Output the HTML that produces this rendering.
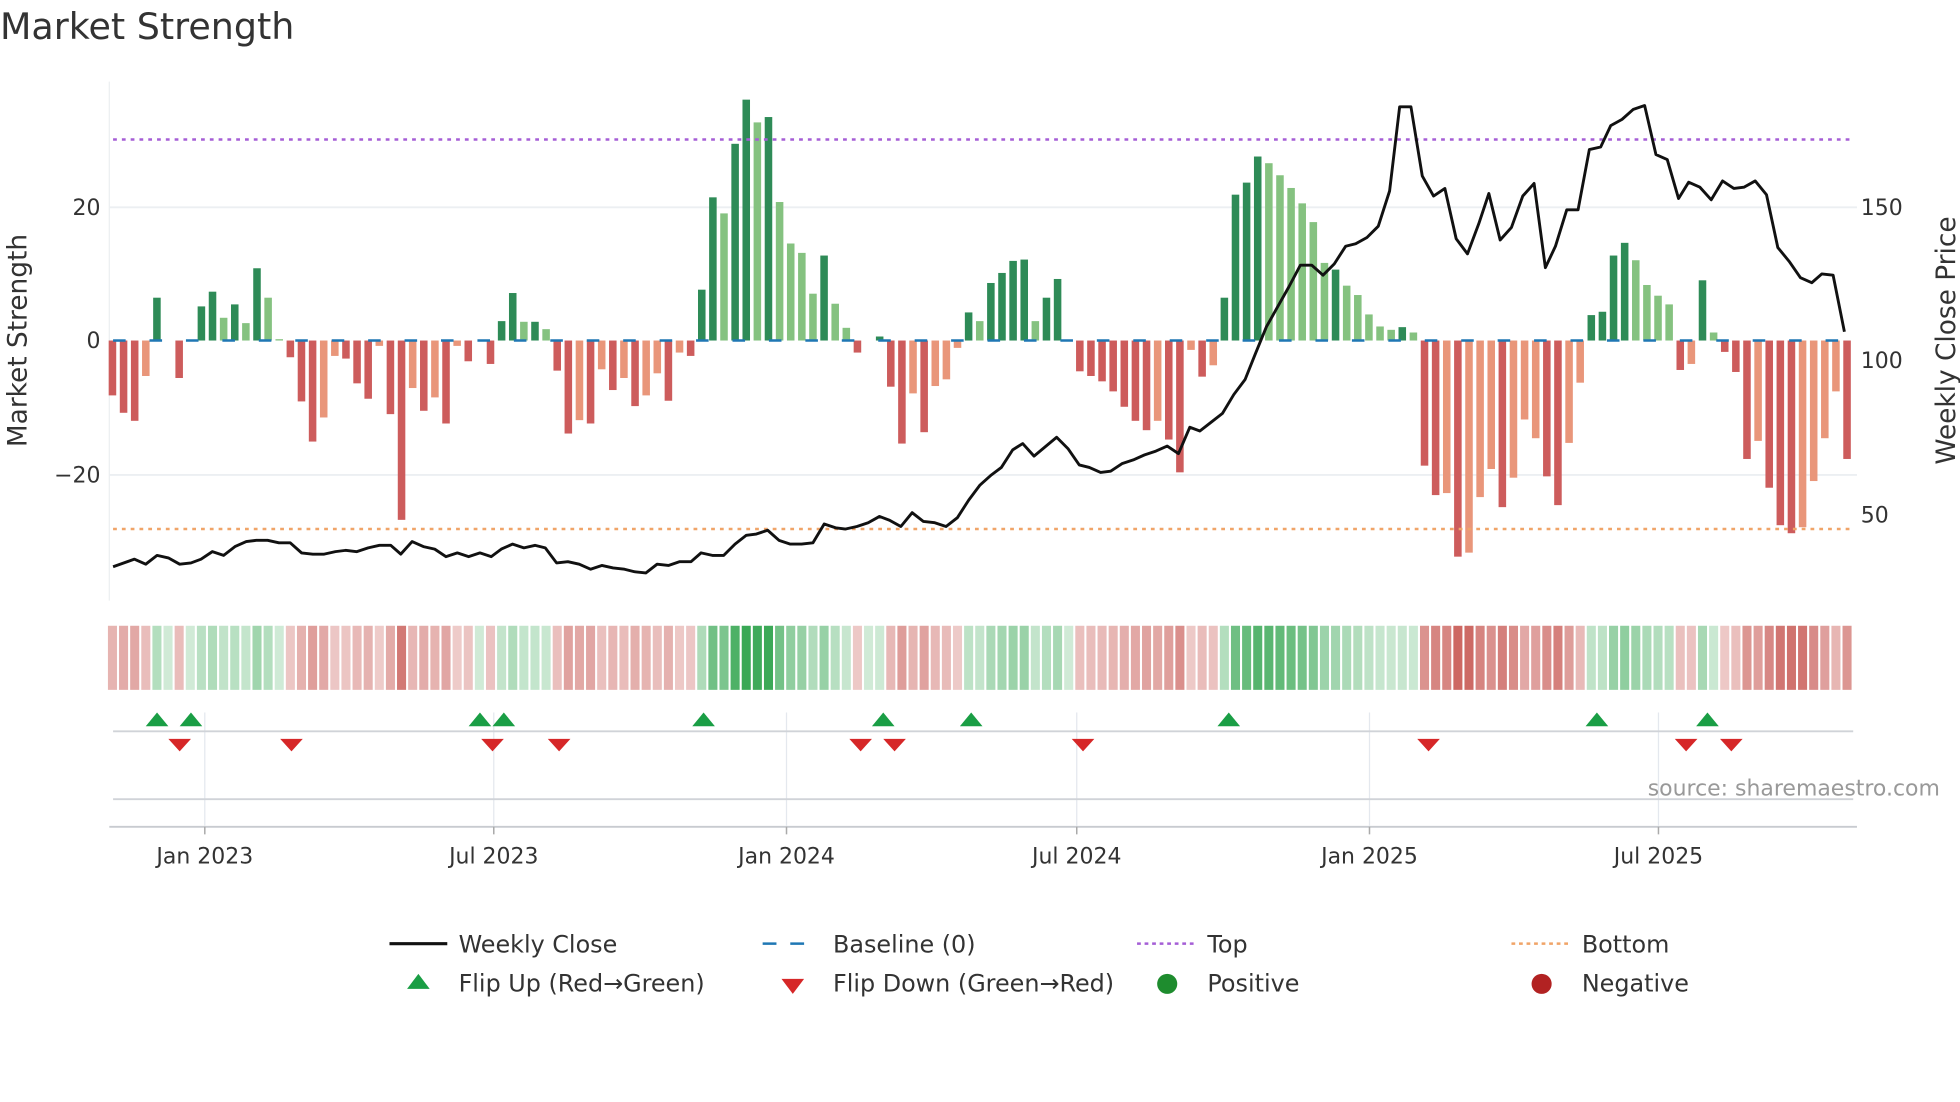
<!DOCTYPE html>
<html><head><meta charset="utf-8">
<style>
html,body{margin:0;padding:0;background:#fff;}
svg{display:block;}
text{font-family:"DejaVu Sans","Liberation Sans",sans-serif;fill:#333;}
</style></head>
<body>
<svg id="s" width="1960" height="1102" viewBox="0 0 1560 877" preserveAspectRatio="none" xmlns="http://www.w3.org/2000/svg">
<text x="0" y="31" font-size="29" fill="#333">Market Strength</text>
<line x1="87" y1="165" x2="1478" y2="165" stroke="#eceff2" stroke-width="1.5"/>
<line x1="87" y1="378" x2="1478" y2="378" stroke="#eceff2" stroke-width="1.5"/>
<line x1="87" y1="65" x2="87" y2="478" stroke="#eceff2" stroke-width="1"/>
<g id="bars"></g>
<line x1="90" y1="271" x2="1476" y2="271" stroke="#1f77b4" stroke-width="2" stroke-dasharray="10,19"/>
<line x1="90" y1="111" x2="1476" y2="111" stroke="#a55ed6" stroke-width="2" stroke-dasharray="3,4"/>
<line x1="90" y1="421" x2="1476" y2="421" stroke="#f0a468" stroke-width="2" stroke-dasharray="3,4"/>
<polyline id="price" fill="none" stroke="#111" stroke-width="2.3" stroke-linejoin="round"/>
<g font-size="17.5">
<text x="80" y="171" text-anchor="end">20</text>
<text x="80" y="277" text-anchor="end">0</text>
<text x="80" y="384" text-anchor="end">−20</text>
<text x="1481" y="171">150</text>
<text x="1481" y="293">100</text>
<text x="1481" y="416">50</text>
</g>
<text transform="translate(21,271) rotate(-90)" text-anchor="middle" font-size="21">Market Strength</text>
<text transform="translate(1556,271) rotate(-90)" text-anchor="middle" font-size="21">Weekly Close Price</text>
<g id="strip"></g>
<g stroke="#e4e8ee" stroke-width="1">
<line x1="163" y1="567" x2="163" y2="657"/><line x1="393" y1="567" x2="393" y2="657"/>
<line x1="626" y1="567" x2="626" y2="657"/><line x1="857" y1="567" x2="857" y2="657"/>
<line x1="1090" y1="567" x2="1090" y2="657"/><line x1="1320" y1="567" x2="1320" y2="657"/>
</g>
<line x1="90" y1="582" x2="1475" y2="582" stroke="#d0d3d8" stroke-width="1.5"/>
<line x1="90" y1="636" x2="1475" y2="636" stroke="#d0d3d8" stroke-width="1.5"/>
<line x1="87" y1="658" x2="1478" y2="658" stroke="#c8cbd0" stroke-width="1.5"/>
<g stroke="#aaa" stroke-width="1.2">
<line x1="163" y1="658" x2="163" y2="664"/><line x1="393" y1="658" x2="393" y2="664"/>
<line x1="626" y1="658" x2="626" y2="664"/><line x1="857" y1="658" x2="857" y2="664"/>
<line x1="1090" y1="658" x2="1090" y2="664"/><line x1="1320" y1="658" x2="1320" y2="664"/>
</g>
<g id="marks"></g>
<g font-size="17.5" text-anchor="middle">
<text x="163" y="687">Jan 2023</text><text x="393" y="687">Jul 2023</text>
<text x="626" y="687">Jan 2024</text><text x="857" y="687">Jul 2024</text>
<text x="1090" y="687">Jan 2025</text><text x="1320" y="687">Jul 2025</text>
</g>
<text x="1544" y="633" text-anchor="end" font-size="17.5" style="fill:#999">source: sharemaestro.com</text>
<line x1="310" y1="751" x2="356" y2="751" stroke="#111" stroke-width="2.5"/>
<text x="365" y="758" font-size="19">Weekly Close</text>
<line x1="607" y1="751" x2="651" y2="751" stroke="#1f77b4" stroke-width="2" stroke-dasharray="11,11"/>
<text x="663" y="758" font-size="19">Baseline (0)</text>
<line x1="905" y1="751" x2="950" y2="751" stroke="#a55ed6" stroke-width="2" stroke-dasharray="3,3"/>
<text x="961" y="758" font-size="19">Top</text>
<line x1="1203" y1="751" x2="1248" y2="751" stroke="#f0a468" stroke-width="2" stroke-dasharray="3,3"/>
<text x="1259" y="758" font-size="19">Bottom</text>
<polygon points="324,787 342,787 333,775" fill="#1a9e45"/>
<text x="365" y="789" font-size="19">Flip Up (Red→Green)</text>
<polygon points="622,779 640,779 631,791" fill="#d62728"/>
<text x="663" y="789" font-size="19">Flip Down (Green→Red)</text>
<circle cx="929" cy="783" r="8" fill="#1e8c2e"/>
<text x="961" y="789" font-size="19">Positive</text>
<circle cx="1227" cy="783" r="8" fill="#b22222"/>
<text x="1259" y="789" font-size="19">Negative</text>
</svg>
<script>
var NS="http://www.w3.org/2000/svg";
var raw="-8.2d -10.8d -12d -5.3l 6.4d 0 -5.6d 0 5.1d 7.3d 3.4l 5.4d 2.6l 10.8d 6.4l 0.2l -2.5d -9.1d -15.1d -11.5l -2.3l -2.7d -6.4d -8.7d -0.8l -11d -26.8d -7.1l -10.5d -8.5l -12.4d -0.8l -3.1d 0 -3.5d 2.9d 7.1d 2.8l 2.8d 1.7l -4.5d -13.9d -11.9l -12.4d -4.3l -7.4d -5.6l -9.8d -8.2l -4.9l -9d -1.8l -2.3d 7.6d 21.4d 19l 29.4d 36d 32.6l 33.4d 20.7l 14.5l 13.1l 7l 12.7d 5.5l 1.9l -1.8d 0 0.6d -6.9d -15.4d -7.9l -13.7d -6.8l -5.8l -1.1l 4.2d 2.9l 8.6d 10.1d 11.9d 12.1d 2.9l 6.4d 9.2d 0 -4.6d -5.3d -6.1d -7.6d -9.9d -12d -13.4d -12l -14.8d -19.7d -1.4l -5.4d -3.7l 6.4d 21.8d 23.6d 27.5d 26.5l 24.7l 22.8l 20.5l 17.7l 11.6l 10.6d 8.2l 6.8l 3.9l 2.1l 1.6l 2d 1.2l -18.7d -23.1d -22.8l -32.3d -31.7l -23.4l -19.2l -24.9d -20.5l -11.8l -14.6l -20.3d -24.6d -15.3l -6.3l 3.8d 4.3d 12.7d 14.6d 12l 8.3l 6.7l 5.4l -4.4d -3.5l 9d 1.2l -1.7d -4.7d -17.7d -15l -22d -27.6d -28.8d -27.9l -21l -14.6l -7.6l -17.7d".split(" ");
var bars=document.getElementById("bars"),strip=document.getElementById("strip");
function mix(c,t){return "rgb("+c.map(function(v){return Math.round(255+(v-255)*t)}).join(",")+")";}
raw.forEach(function(s,i){
 var v=parseFloat(s),t=s.slice(-1),x=89.5+i*8.85;
 if(v!==0){
  var r=document.createElementNS(NS,"rect");
  var h=Math.abs(v)*5.325;
  r.setAttribute("x",x-3);r.setAttribute("width",6);
  r.setAttribute("y",v>0?271-h:271);r.setAttribute("height",h);
  var col=v>0?(t=="d"?"#2e8b57":"#85c280"):(t=="d"?"#cd5c5c":"#e9967a");
  r.setAttribute("fill",col);bars.appendChild(r);
 }
 var q=document.createElementNS(NS,"rect");
 q.setAttribute("x",x-3.6);q.setAttribute("width",7.2);q.setAttribute("y",498);q.setAttribute("height",51);
 var k=Math.min(1,Math.abs(v)/34);
 var c=v>=0?mix([40,160,70],0.22+0.7*k):mix([200,90,85],0.3+0.65*k);
 q.setAttribute("fill",c);strip.appendChild(q);
});
var pts="90,451 107,445 116,449 125,442 134,444 143,449 152,448 160,445 169,439 178,442 187,435 196,431 204,430 213,430 222,432 231,432 240,440 249,441 258,441 267,439 275,438 284,439 293,436 302,434 311,434 319,441 328,431 337,435 346,437 355,443 364,440 373,443 382,440 391,443 399,437 408,433 417,436 426,434 434,436 443,448 452,447 461,449 470,453 479,450 488,452 497,453 505,455 514,456 523,449 532,450 541,447 550,447 558,440 567,442 576,442 585,433 594,426 602,425 611,422 620,430 629,433 638,433 647,432 656,417 665,420 673,421 682,419 691,416 700,411 708,414 717,419 726,408 735,415 744,416 753,419 762,412 771,398 780,386 789,378 797,372 806,358 814,353 823,363 841,348 850,357 859,370 867,372 876,376 884,375 893,369 902,366 911,362 920,359 929,355 938,361 947,340 955,343 964,336 973,329 982,314 991,302 999,282 1008,260 1017,244 1026,228 1035,211 1044,211 1053,219 1062,210 1071,196 1079,194 1088,189 1097,180 1106,152 1114,85 1123,85 1132,140 1141,156 1150,150 1159,190 1168,202 1177,178 1185,154 1194,191 1203,181 1212,156 1221,146 1230,213 1238,196 1247,167 1256,167 1265,119 1274,117 1282,100 1291,95 1300,87 1309,84 1318,123 1327,127 1336,158 1344,145 1353,149 1362,159 1371,144 1380,150 1388,149 1397,144 1406,155 1415,197 1424,208 1433,221 1442,225 1450,218 1459,219 1468,264";
document.getElementById("price").setAttribute("points",pts);
var marks=document.getElementById("marks");
[125,152,382,401,560,703,773,978,1271,1359].forEach(function(x){
 var p=document.createElementNS(NS,"polygon");
 p.setAttribute("points",(x-9)+",578 "+(x+9)+",578 "+x+",567");p.setAttribute("fill","#1a9e45");marks.appendChild(p);});
[143,232,392,445,685,712,862,1137,1342,1378].forEach(function(x){
 var p=document.createElementNS(NS,"polygon");
 p.setAttribute("points",(x-9)+",588 "+(x+9)+",588 "+x+",598");p.setAttribute("fill","#d62728");marks.appendChild(p);});
</script>
</body></html>
